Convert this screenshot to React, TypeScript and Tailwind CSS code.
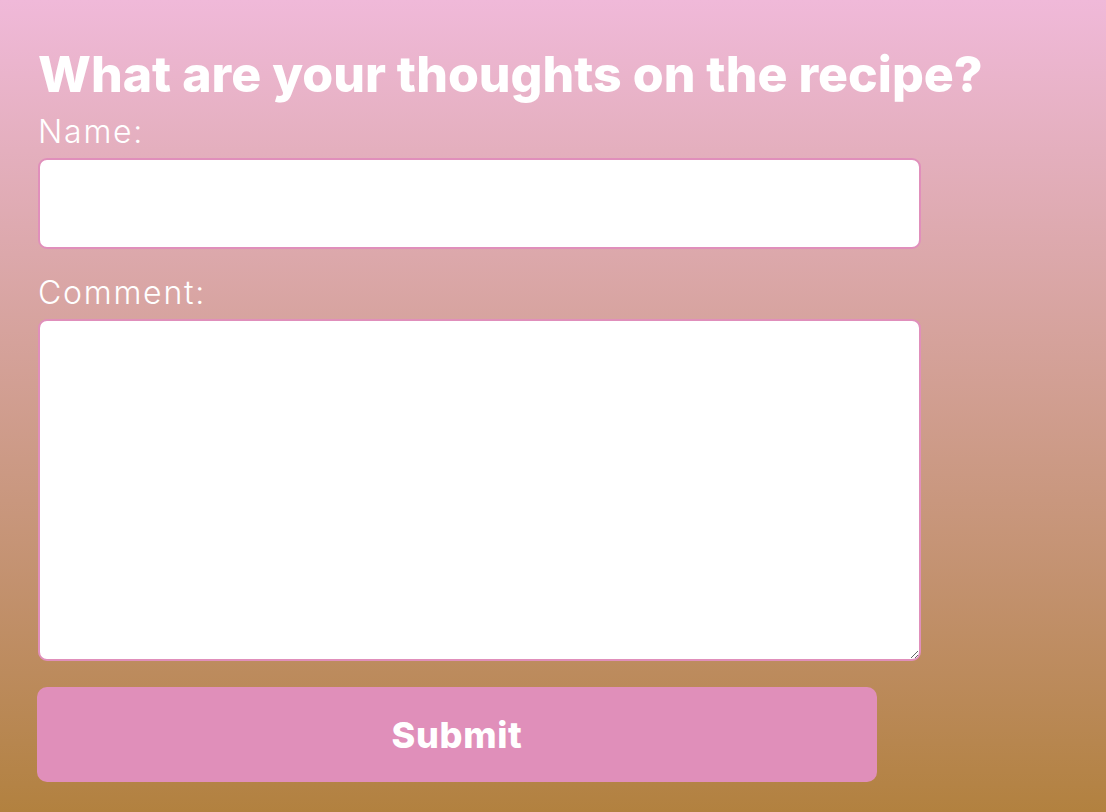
export default function App() {
  return (
    <div
      className="min-h-[812px] w-full bg-gradient-to-b from-[#f0b9d9] to-[#b2813f] pl-[38px] pt-[44px]"
      style={{ fontFamily: "Inter, 'Noto Sans', sans-serif" }}
    >
      <h1 className="text-[50px] font-extrabold leading-[60px] text-white tracking-normal">
        What are your thoughts on the recipe?
      </h1>
      <form className="flex flex-col" onSubmit={(e) => e.preventDefault()}>
        <label className="mt-[8px] text-[32px] font-light leading-[40px] tracking-[1.75px] text-white">Name:</label>
        <input
          type="text"
          className="mt-[6px] h-[91px] w-[883px] rounded-[9px] border-2 border-[#e08fbb] bg-white outline-none"
        />
        <label className="mt-[24px] text-[32px] font-light leading-[40px] tracking-[1.75px] text-white">Comment:</label>
        <textarea className="mt-[6px] h-[342px] w-[883px] rounded-[9px] border-2 border-[#e08fbb] bg-white outline-none" />
        <button
          type="submit"
          className="mt-[26px] h-[95px] w-[840px] rounded-[10px] bg-[#e08fba] text-[36px] font-extrabold tracking-[0.7px] text-white -ml-px"
        >
          Submit
        </button>
      </form>
    </div>
  );
}
